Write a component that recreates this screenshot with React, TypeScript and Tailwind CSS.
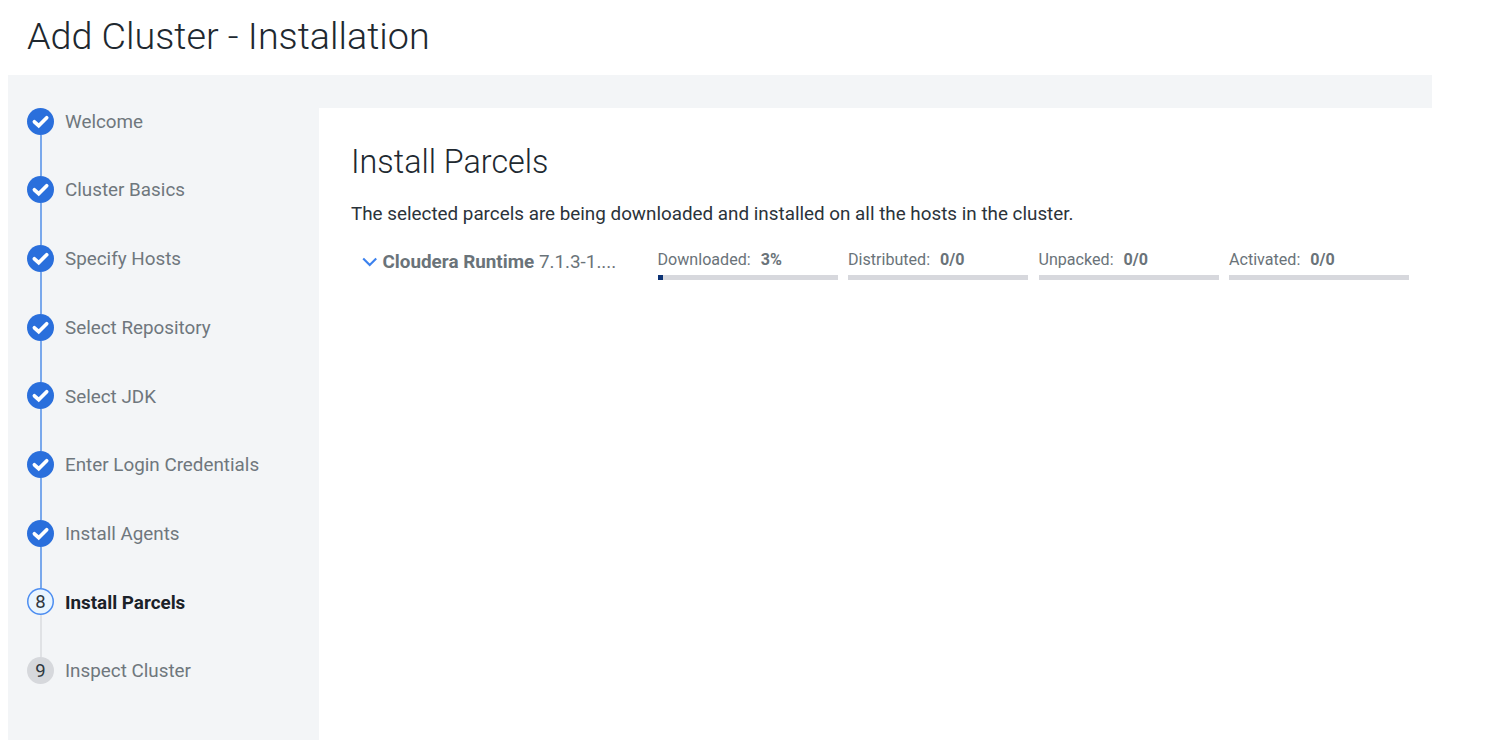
const steps = [
  "Welcome",
  "Cluster Basics",
  "Specify Hosts",
  "Select Repository",
  "Select JDK",
  "Enter Login Credentials",
  "Install Agents",
  "Install Parcels",
  "Inspect Cluster",
];
const current = 7;

const phases = [
  { label: "Downloaded", value: "3%", percent: 3 },
  { label: "Distributed", value: "0/0", percent: 0 },
  { label: "Unpacked", value: "0/0", percent: 0 },
  { label: "Activated", value: "0/0", percent: 0 },
];

function Marker({ index }: { index: number }) {
  if (index < current) {
    return (
      <svg viewBox="0 0 27 27" className="size-[27px] shrink-0" fill="none">
        <circle cx="13.5" cy="13.5" r="13.5" fill="#2a6fdc" />
        <path
          d="M7.4 13.8 11.7 17.7 19.7 9.7"
          stroke="#fff"
          strokeWidth="3.7"
          strokeLinecap="round"
        />
      </svg>
    );
  }
  if (index === current) {
    return (
      <span className="flex size-[27px] shrink-0 items-center justify-center rounded-full bg-[#e9f5fe] text-[18.5px] leading-[28px] text-[#2f3840] ring-[1.5px] ring-[#4d8df0] ring-inset">
        {index + 1}
      </span>
    );
  }
  return (
    <span className="flex size-[27px] shrink-0 items-center justify-center rounded-full bg-[#d6d8dc] pt-px text-[18.5px] leading-[28px] text-[#2f3840]">
      {index + 1}
    </span>
  );
}

function Step({ index, label }: { index: number; label: string }) {
  const last = index === steps.length - 1;
  return (
    <li className={last ? "flex h-[27px]" : "flex h-[68.7px]"}>
      <div className="flex w-[27px] flex-col items-center">
        <Marker index={index} />
        {!last && (
          <span
            className={
              index < current
                ? "ml-px w-[2px] grow bg-[#79a8ec]"
                : "ml-px w-[2px] grow bg-[#e0e2e5]"
            }
          />
        )}
      </div>
      <span
        className={
          index === current
            ? "mt-[0.3px] ml-[11px] h-[27px] text-[18.84px] leading-[28px] font-bold whitespace-nowrap text-[#1b2229]"
            : "mt-[0.3px] ml-[11px] h-[27px] text-[18.84px] leading-[28px] whitespace-nowrap text-[#6f777d]"
        }
      >
        {label}
      </span>
    </li>
  );
}

export default function App() {
  return (
    <div className="flex h-[740px] w-[1488px] flex-col overflow-hidden bg-white font-['Roboto',sans-serif]">
      <header className="h-[75px] shrink-0 pl-[27px]">
        <h1 className="text-[37.7px] leading-[73px] font-light text-[#20282f]">
          Add Cluster - Installation
        </h1>
      </header>
      <div className="ml-[8px] flex w-[1424px] grow bg-[#f3f5f7] pt-[32.5px]">
        <nav className="w-[310.5px] shrink-0 pl-[19px]">
          <ol className="flex flex-col">
            {steps.map((label, i) => (
              <Step key={label} index={i} label={label} />
            ))}
          </ol>
        </nav>
        <main className="flex grow flex-col bg-white pt-[32px] pl-[32.5px]">
          <h2 className="text-[32.3px] leading-[44px] font-light text-[#20282f]">Install Parcels</h2>
          <p className="mt-[16px] text-[18.84px] leading-[28px] text-[#2b333a]">
            The selected parcels are being downloaded and installed on all the hosts in the cluster.
          </p>
          <div className="mt-[19px] flex pl-[11px]">
            <div className="flex w-[295.5px] shrink-0 items-start">
              <svg viewBox="0 0 16 10" className="mt-[10px] h-[10px] w-[16px]" fill="none">
                <path d="M1.2 1.5 7.7 8 14.2 1.5" stroke="#3c82ee" strokeWidth="2.1" />
              </svg>
              <span className="ml-[4.5px] text-[18.85px] leading-[30px] whitespace-nowrap text-[#6a7379]">
                <b className="font-bold">Cloudera Runtime</b> 7.1.3-1....
              </span>
            </div>
            <div className="flex gap-[10.5px]">
              {phases.map((p) => (
                <div key={p.label} className="w-[180px]">
                  <div className="flex gap-[10px] text-[16.1px] leading-[26px] text-[#6a7379]">
                    <span>{p.label}:</span>
                    <b className="font-bold">{p.value}</b>
                  </div>
                  <div className="mt-[2px] h-[5.5px] bg-[#d7d8dd]">
                    <div className="h-full bg-[#0c3274]" style={{ width: `${p.percent}%` }} />
                  </div>
                </div>
              ))}
            </div>
          </div>
        </main>
      </div>
    </div>
  );
}
